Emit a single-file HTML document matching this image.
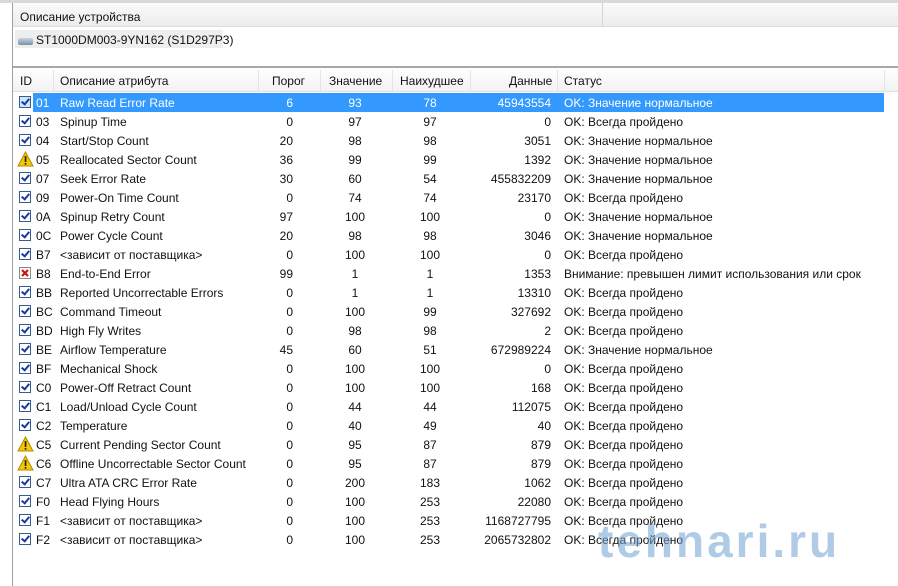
<!DOCTYPE html>
<html><head><meta charset="utf-8"><style>
*{margin:0;padding:0;box-sizing:border-box}
body{width:898px;height:586px;background:#fff;font-family:"Liberation Sans","DejaVu Sans",sans-serif;font-size:12px;color:#111;position:relative;overflow:hidden}
.a{position:absolute;white-space:nowrap}
.r{position:absolute;left:13px;width:885px;height:19px}
.r span{position:absolute;top:3px}
.cb{position:absolute;left:6px;top:3px;width:12px;height:12px;border:1px solid #3a5a8a;background:#fff}
.cb:after{content:"";position:absolute;left:3px;top:0px;width:3px;height:6px;border:solid #1a3aa0;border-width:0 2px 2px 0;transform:rotate(40deg)}
.bg{position:absolute;left:20px;top:0;width:851px;height:19px;background:#3399ff}
.rt{text-align:right}
.hd span{position:absolute;top:6px}
</style></head><body>
<div class="a" style="left:0;top:0;width:898px;height:3px;background:#d8d8d8"></div>
<div class="a" style="left:12px;top:3px;width:1px;height:583px;background:#a0a0a0"></div>
<div class="a" style="left:13px;top:3px;width:885px;height:24px;background:linear-gradient(#fafafa,#ececec);border-bottom:1px solid #ddd"></div>
<div class="a" style="left:602px;top:3px;width:1px;height:24px;background:#d4d4d4"></div>
<div class="a" style="left:20px;top:10px">Описание устройства</div>
<div class="a" style="left:15px;top:30px;width:208px;height:18px;background:#eeeeee"></div>
<div class="a" style="left:18px;top:38px;width:15px;height:7px;background:linear-gradient(#c8d4e0,#7890a8);border-radius:2px"></div>
<div class="a" style="left:36px;top:33px">ST1000DM003-9YN162 (S1D297P3)</div>
<div class="a" style="left:13px;top:66px;width:885px;height:2px;background:#a8a8a8"></div>
<div class="a" style="left:13px;top:68px;width:885px;height:24px;background:linear-gradient(#fff,#f2f2f2);border-bottom:1px solid #e0e0e0"></div>
<div class="a hd" style="left:0;top:68px;width:898px;height:24px">
<span style="left:20px">ID</span>
<span style="left:60px">Описание атрибута</span>
<span style="left:272px">Порог</span>
<span style="left:329px">Значение</span>
<span style="left:400px">Наихудшее</span>
<span style="left:509px">Данные</span>
<span style="left:564px">Статус</span>
</div>
<div class="a" style="left:53px;top:70px;width:1px;height:22px;background:#e4e4e4"></div>
<div class="a" style="left:258px;top:70px;width:1px;height:22px;background:#e4e4e4"></div>
<div class="a" style="left:320px;top:70px;width:1px;height:22px;background:#e4e4e4"></div>
<div class="a" style="left:392px;top:70px;width:1px;height:22px;background:#e4e4e4"></div>
<div class="a" style="left:470px;top:70px;width:1px;height:22px;background:#e4e4e4"></div>
<div class="a" style="left:557px;top:70px;width:1px;height:22px;background:#e4e4e4"></div>
<div class="a" style="left:884px;top:70px;width:1px;height:22px;background:#e4e4e4"></div>
<div id="rows"></div>
<div class="a" style="left:598px;top:514px;font:bold 46px 'Liberation Sans',sans-serif;color:rgba(110,160,210,0.55);letter-spacing:3px">tehnari.ru</div>
<script>
var d=[["01","Raw Read Error Rate",6,93,78,"45943554","OK: Значение нормальное","c"],
["03","Spinup Time",0,97,97,"0","OK: Всегда пройдено","c"],
["04","Start/Stop Count",20,98,98,"3051","OK: Значение нормальное","c"],
["05","Reallocated Sector Count",36,99,99,"1392","OK: Значение нормальное","w"],
["07","Seek Error Rate",30,60,54,"455832209","OK: Значение нормальное","c"],
["09","Power-On Time Count",0,74,74,"23170","OK: Всегда пройдено","c"],
["0A","Spinup Retry Count",97,100,100,"0","OK: Значение нормальное","c"],
["0C","Power Cycle Count",20,98,98,"3046","OK: Значение нормальное","c"],
["B7","&lt;зависит от поставщика&gt;",0,100,100,"0","OK: Всегда пройдено","c"],
["B8","End-to-End Error",99,1,1,"1353","Внимание: превышен лимит использования или срок","x"],
["BB","Reported Uncorrectable Errors",0,1,1,"13310","OK: Всегда пройдено","c"],
["BC","Command Timeout",0,100,99,"327692","OK: Всегда пройдено","c"],
["BD","High Fly Writes",0,98,98,"2","OK: Всегда пройдено","c"],
["BE","Airflow Temperature",45,60,51,"672989224","OK: Значение нормальное","c"],
["BF","Mechanical Shock",0,100,100,"0","OK: Всегда пройдено","c"],
["C0","Power-Off Retract Count",0,100,100,"168","OK: Всегда пройдено","c"],
["C1","Load/Unload Cycle Count",0,44,44,"112075","OK: Всегда пройдено","c"],
["C2","Temperature",0,40,49,"40","OK: Всегда пройдено","c"],
["C5","Current Pending Sector Count",0,95,87,"879","OK: Всегда пройдено","w"],
["C6","Offline Uncorrectable Sector Count",0,95,87,"879","OK: Всегда пройдено","w"],
["C7","Ultra ATA CRC Error Rate",0,200,183,"1062","OK: Всегда пройдено","c"],
["F0","Head Flying Hours",0,100,253,"22080","OK: Всегда пройдено","c"],
["F1","&lt;зависит от поставщика&gt;",0,100,253,"1168727795","OK: Всегда пройдено","c"],
["F2","&lt;зависит от поставщика&gt;",0,100,253,"2065732802","OK: Всегда пройдено","c"]];
var h="";
d.forEach(function(r,i){
var y=93+19*i, s=i==0;
var ic=r[7]=="c"?'<div class="cb"'+(s?' style="background:#cfe6ff"':'')+'></div>':
 r[7]=="w"?'<svg style="position:absolute;left:4px;top:1px" width="17" height="16"><path d="M8.5 1L16 15H1Z" fill="#f5c800" stroke="#b08a00"/><rect x="7.7" y="5" width="1.7" height="6" fill="#222"/><rect x="7.7" y="12" width="1.7" height="1.7" fill="#222"/></svg>':
 '<svg style="position:absolute;left:6px;top:3px" width="12" height="12"><rect x="0.5" y="0.5" width="11" height="11" fill="#fff" stroke="#888"/><path d="M3 3L9 9M9 3L3 9" stroke="#d01010" stroke-width="2.2"/></svg>';
h+='<div class="r" style="top:'+y+'px;'+(s?'color:#fff':'')+'">'+(s?'<div class="bg"></div>':'')+ic+
'<span style="left:23px">'+r[0]+'</span><span style="left:47px">'+r[1]+'</span>'+
'<span class="rt" style="left:220px;width:60px">'+r[2]+'</span>'+
'<span style="left:312px;width:60px;text-align:center">'+r[3]+'</span>'+
'<span style="left:387px;width:60px;text-align:center">'+r[4]+'</span>'+
'<span class="rt" style="left:438px;width:100px">'+r[5]+'</span>'+
'<span style="left:551px">'+r[6]+'</span></div>';});
document.getElementById("rows").innerHTML=h;
</script>
</body></html>
